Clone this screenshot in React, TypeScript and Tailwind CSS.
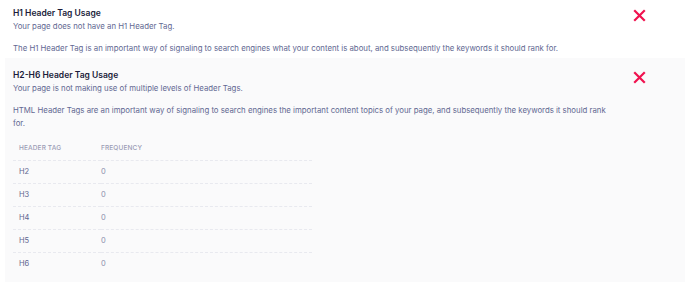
const rows = [
  { tag: "H2", count: 0 },
  { tag: "H3", count: 0 },
  { tag: "H4", count: 0 },
  { tag: "H5", count: 0 },
  { tag: "H6", count: 0 },
];

function FailIcon() {
  return (
    <svg
      className="mt-[2px] h-[13px] w-[13px] shrink-0 text-[#f0124f]"
      viewBox="0 0 13 13"
      fill="none"
      stroke="currentColor"
      strokeWidth={2.2}
      strokeLinecap="square"
    >
      <path d="M2 2 11 11M11 2 2 11" />
    </svg>
  );
}

export default function App() {
  return (
    <div
      className="h-[287px] w-[690px] overflow-hidden bg-white px-[5px] text-[7.8px] leading-[13px] text-[#626892]"
      style={{ fontFamily: "Inter, 'Noto Sans', sans-serif" }}
    >
      <section className="flex gap-[12px] pl-[8px] pr-[39px] pb-[3px] pt-[7px]">
        <div className="flex-1">
          <h2 className="text-[8.5px] font-semibold text-[#1b1c3a]">H1 Header Tag Usage</h2>
          <p>Your page does not have an H1 Header Tag.</p>
          <p className="mt-[9px] max-w-[597px]">
            The H1 Header Tag is an important way of signaling to search engines what your content is about, and
            subsequently the keywords it should rank for.
          </p>
        </div>
        <FailIcon />
      </section>

      <section className="flex gap-[12px] bg-[#fafafb] pl-[8px] pr-[39px] pb-[7px] pt-[11px]">
        <div className="flex-1">
          <h2 className="text-[8.5px] font-semibold text-[#1b1c3a]">H2-H6 Header Tag Usage</h2>
          <p>Your page is not making use of multiple levels of Header Tags.</p>
          <p className="mt-[9px] max-w-[597px]">
            HTML Header Tags are an important way of signaling to search engines the important content topics of your
            page, and subsequently the keywords it should rank for.
          </p>

          <table className="mt-[7px] w-[299px] border-collapse">
            <thead>
              <tr className="h-[23px] border-b border-dashed border-[#e8e9ef]">
                <th className="w-[88px] pl-[6px] text-left text-[6.5px] font-medium uppercase tracking-[0.02em] text-[#9a9cb5]">
                  Header Tag
                </th>
                <th className="text-left text-[6.5px] font-medium uppercase tracking-[0.02em] text-[#9a9cb5]">
                  Frequency
                </th>
              </tr>
            </thead>
            <tbody>
              {rows.map((r, i) => (
                <tr
                  key={r.tag}
                  className={
                    i < rows.length - 1
                      ? "h-[23px] border-b border-dashed border-[#e8e9ef]"
                      : "h-[23px]"
                  }
                >
                  <td className="pl-[6px] text-[7.5px] text-[#5f6590]">{r.tag}</td>
                  <td className="text-[7.5px] text-[#8a8eab]">{r.count}</td>
                </tr>
              ))}
            </tbody>
          </table>
        </div>
        <FailIcon />
      </section>
    </div>
  );
}
